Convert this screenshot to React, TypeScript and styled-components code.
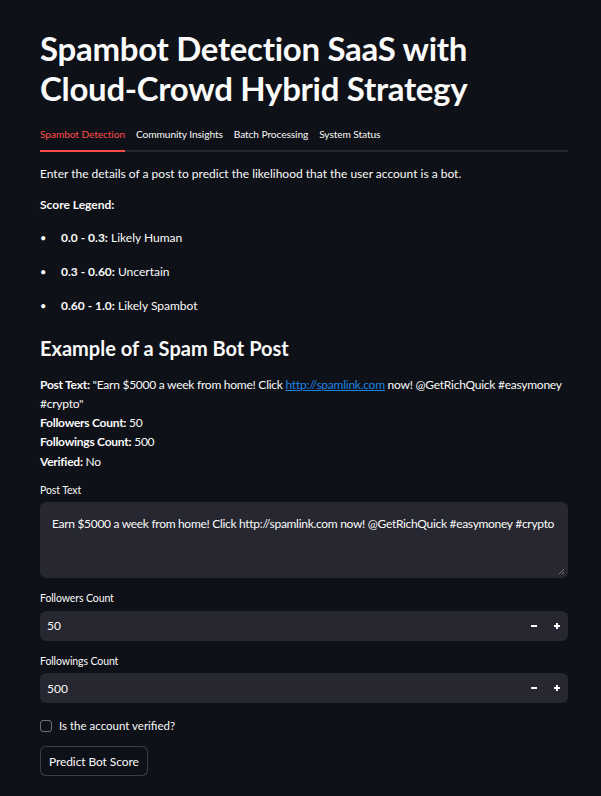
import React from "react";
import styled, { createGlobalStyle } from "styled-components";

const Global = createGlobalStyle`
  html, body { margin: 0; padding: 0; background: #0e1117; }
  body { font-family: Lato, "Noto Sans", sans-serif; color: rgb(250,250,250); }
  * { box-sizing: border-box; }
`;

const Page = styled.main`
  width: 601px;
  min-height: 796px;
  background: #0e1117;
  padding: 29px 33px 20px 40px;
`;

const Title = styled.h1`
  margin: 0;
  font-size: 33px;
  line-height: 39.6px;
  font-weight: 700;
  letter-spacing: -0.3px;
`;

const TabList = styled.div`
  display: flex;
  gap: 11px;
  margin-top: 13px;
  border-bottom: 2px solid #262730;
  width: 528px;
`;

const Tab = styled.div<{ $active?: boolean }>`
  position: relative;
  font-size: 10.2px;
  letter-spacing: -0.1px;
  line-height: 14px;
  padding: 6px 0 9px;
  color: ${(p) => (p.$active ? "rgb(255,75,75)" : "rgb(250,250,250)")};
  &::after {
    content: "";
    display: ${(p) => (p.$active ? "block" : "none")};
    position: absolute;
    left: 0;
    right: 0;
    bottom: -2px;
    height: 2.5px;
    background: rgb(255,75,75);
  }
`;

const Para = styled.p<{ $mt?: number }>`
  margin: ${(p) => p.$mt ?? 0}px 0 0;
  font-size: 12px;
  line-height: 19.2px;
`;

const List = styled.ul`
  margin: 13px 0 0;
  padding: 0;
  list-style: none;
  font-size: 12px;
  line-height: 19.2px;
  li { margin: 0 0 14.8px; display: flex; }
  li:last-child { margin-bottom: 0; }
  li::before { content: "•"; width: 21px; flex: none; font-size: 11px; }
`;

const H3 = styled.h3`
  margin: 19px 0 0;
  font-size: 20px;
  line-height: 28px;
  font-weight: 700;
`;

const Block = styled.div`
  margin-top: 13px;
  font-size: 12px;
  line-height: 19.2px;
  letter-spacing: -0.25px;
  a { color: rgb(28,131,225); text-decoration: underline; }
`;

const Label = styled.div<{ $mt?: number }>`
  margin-top: ${(p) => p.$mt ?? 0}px;
  font-size: 10.5px;
  line-height: 14px;
  margin-bottom: 5.5px;
  letter-spacing: -0.1px;
`;

const TextArea = styled.div`
  position: relative;
  width: 528px;
  height: 76px;
  background: #262730;
  border-radius: 6px;
  padding: 12px 10px 12px 12px;
  font-size: 12px;
  line-height: 19.2px;
  letter-spacing: -0.3px;
`;

const Grip = styled.svg`
  position: absolute;
  right: 3px;
  bottom: 3px;
`;

const NumberBox = styled.div`
  display: flex;
  align-items: center;
  width: 528px;
  height: 30px;
  background: #262730;
  border-radius: 6px;
  padding-left: 7px;
  font-size: 12px;
`;

const NumVal = styled.span`
  flex: 1;
`;

const Step = styled.span`
  width: 23px;
  height: 30px;
  display: flex;
  align-items: center;
  justify-content: center;
`;

const CheckRow = styled.label`
  display: flex;
  align-items: center;
  gap: 7px;
  margin-top: 16px;
  font-size: 11.5px;
  line-height: 14px;
`;

const Box = styled.span`
  width: 12px;
  height: 12px;
  border: 1px solid rgba(250,250,250,0.4);
  border-radius: 3px;
`;

const Button = styled.button`
  margin-top: 13px;
  display: block;
  height: 30px;
  padding: 0 8px;
  background: #0e1117;
  color: rgb(250,250,250);
  border: 1px solid rgba(250,250,250,0.2);
  border-radius: 6px;
  font-family: inherit;
  font-size: 12px;
  letter-spacing: -0.1px;
`;

const Minus = () => (
  <svg width="8" height="8" viewBox="0 0 8 8"><rect x="1" y="3" width="6" height="2" fill="#fafafa" /></svg>
);
const Plus = () => (
  <svg width="8" height="8" viewBox="0 0 8 8"><rect x="1" y="3" width="6" height="2" fill="#fafafa" /><rect x="3" y="1" width="2" height="6" fill="#fafafa" /></svg>
);

const NumberInput = ({ value }: { value: string }) => (
  <NumberBox>
    <NumVal>{value}</NumVal>
    <Step><Minus /></Step>
    <Step><Plus /></Step>
  </NumberBox>
);

export default function App() {
  return (
    <Page>
      <Global />
      <Title>Spambot Detection SaaS with Cloud-Crowd Hybrid Strategy</Title>
      <TabList>
        <Tab $active>Spambot Detection</Tab>
        <Tab>Community Insights</Tab>
        <Tab>Batch Processing</Tab>
        <Tab>System Status</Tab>
      </TabList>
      <Para $mt={12}>Enter the details of a post to predict the likelihood that the user account is a bot.</Para>
      <Para $mt={12}><b>Score Legend:</b></Para>
      <List>
        <li><span><b>0.0 - 0.3:</b> Likely Human</span></li>
        <li><span><b>0.3 - 0.60:</b> Uncertain</span></li>
        <li><span><b>0.60 - 1.0:</b> Likely Spambot</span></li>
      </List>
      <H3>Example of a Spam Bot Post</H3>
      <Block>
        <div><b>Post Text:</b> "Earn $5000 a week from home! Click <a href="#">http://spamlink.com</a> now! @GetRichQuick #easymoney #crypto"</div>
        <div><b>Followers Count:</b> 50</div>
        <div><b>Followings Count:</b> 500</div>
        <div><b>Verified:</b> No</div>
      </Block>
      <Label $mt={12}>Post Text</Label>
      <TextArea>
        Earn $5000 a week from home! Click http://spamlink.com now! @GetRichQuick #easymoney #crypto
        <Grip width="7" height="7" viewBox="0 0 7 7"><path d="M1 6L6 1M4 6L6 4" stroke="#888" strokeWidth="0.8" /></Grip>
      </TextArea>
      <Label $mt={13}>Followers Count</Label>
      <NumberInput value="50" />
      <Label $mt={13}>Followings Count</Label>
      <NumberInput value="500" />
      <CheckRow><Box />Is the account verified?</CheckRow>
      <Button>Predict Bot Score</Button>
    </Page>
  );
}
